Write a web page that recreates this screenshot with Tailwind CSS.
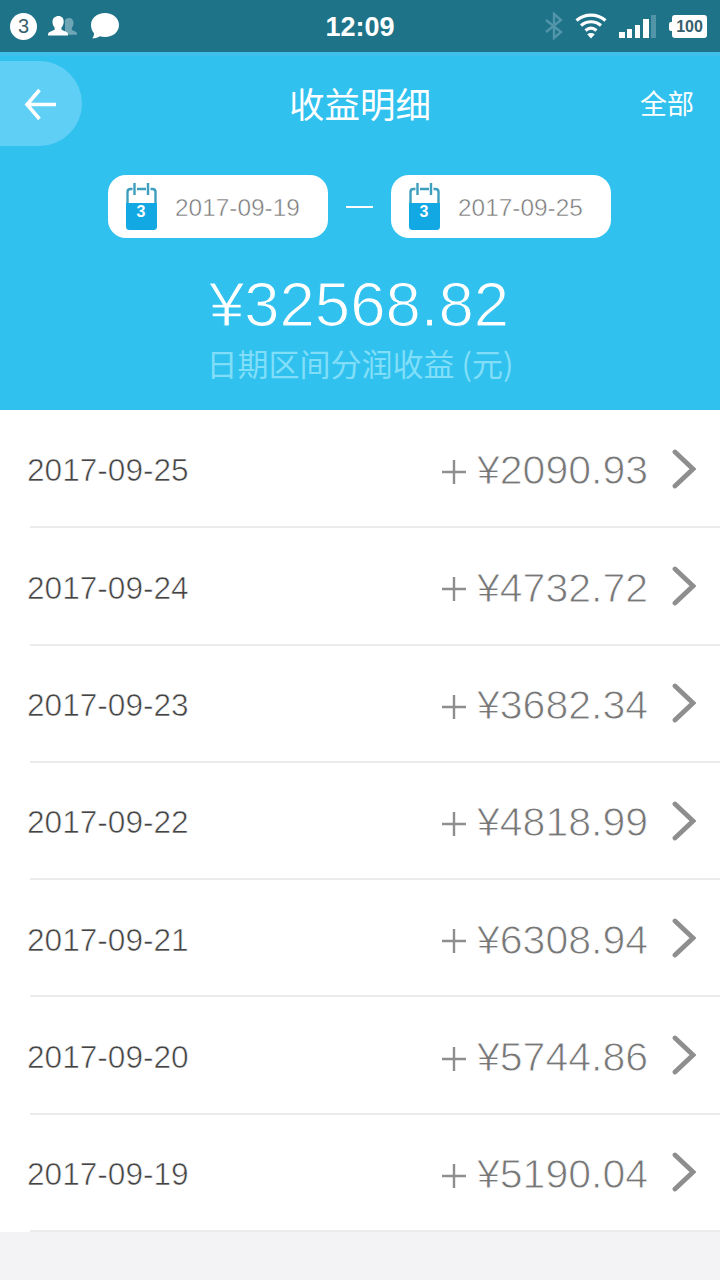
<!DOCTYPE html>
<html lang="zh-CN">
<head>
  <meta charset="UTF-8">
  <meta name="viewport" content="width=device-width, initial-scale=1.0">
  <title>收益明细</title>
  <script src="https://cdn.jsdelivr.net/npm/@tailwindcss/browser@4"></script>
</head>
<body class="bg-[#f3f2f5] font-['Liberation_Sans','Noto_Sans_CJK_SC',sans-serif] w-[720px] h-[1280px] overflow-hidden">

  <!-- Status bar -->
  <div class="h-[52px] bg-[#1f7389] grid grid-cols-3 items-center text-white">
    <div class="flex items-center pl-[10px]">
      <span class="size-[27px] rounded-full bg-white text-[#35606c] text-[20px] leading-none flex items-center justify-center">3</span>
      <svg class="ml-[11px]" width="30" height="22" viewBox="0 0 30 22">
        <path fill="#6fa6b5" d="M21 3c3 0 4.500 2 4.500 5 0 2-.6 3.500-1.700 5v2l4 1.800c1 .5 1.200 1.400 1.200 3H17V5c.9-1.300 2.200-2 4-2z"/>
        <path fill="#fff" d="M10.500 1c3.300 0 5.200 2.200 5.200 5.600 0 2.400-.7 4.300-2.200 6v2.200l5 2.200c1.300.6 1.500 1.700 1.500 3.500H0c0-1.800.3-2.900 1.600-3.500l5-2.200v-2.200c-1.500-1.700-2.100-3.600-2.100-6C4.500 3.200 7.200 1 10.500 1z"/>
      </svg>
      <svg class="ml-[12px]" width="30" height="28" viewBox="0 0 30 28">
        <path fill="#fff" d="M15 1c8 0 14 5 14 12s-6 12-14 12c-2 0-3.800-.3-5.400-.8C7.500 25.700 5 26.500 2.200 26.300c1.200-1.400 1.900-3 1.800-5C2 19 1 16.300 1 13 1 6 7 1 15 1z"/>
      </svg>
    </div>
    <div class="pt-[2px] text-center text-[27px] leading-none font-bold">12:09</div>
    <div class="flex items-center justify-end pr-[13px]">
      <svg width="20" height="28" viewBox="0 0 20 28" fill="none" stroke="#5295a9" stroke-width="2.400">
        <path d="M2 8l15 12-7 6V2l7 6L2 20"/>
      </svg>
      <svg class="ml-[11px]" width="32" height="26" viewBox="0 0 32 26" fill="none" stroke="#fff" stroke-width="3.200">
        <path d="M1.500 7.500c8.500-7.300 20.500-7.300 29 0"/>
        <path d="M6 12.500c6-5 14-5 20 0"/>
        <path d="M10.500 17.500c3.500-3 7.500-3 11 0"/>
        <path fill="#fff" stroke="none" d="M12.200 21.300c2.300-1.900 5.300-1.900 7.600 0L16 25.500z"/>
      </svg>
      <svg class="ml-[12px]" width="38" height="24" viewBox="0 0 38 24" fill="#fff">
        <path d="M0 18h6v6H0zM8 15h5v9H8zM16 11h5v13h-5zM24 5h6v19h-6z"/>
        <path fill="#5295a9" d="M32 1h5v23h-5z"/>
      </svg>
      <div class="ml-[12px] flex items-center">
        <span class="w-[3px] h-[9px] bg-white rounded-l-xs"></span>
        <span class="w-[35px] h-[23px] pt-[2px] rounded-[3px] bg-white text-[#35606c] text-[16px] leading-none font-bold flex items-center justify-center">100</span>
      </div>
    </div>
  </div>

  <!-- Header -->
  <header class="h-[358px] bg-[#30c1ef] text-white border-t-4 border-[#3fc0ec]">
    <div class="h-[96px] pt-[5px] flex items-start justify-between">
      <a href="#" class="w-[82px] h-[85px] rounded-r-full bg-[#5fcff5] flex items-center pl-[24px]">
        <svg width="34" height="32" viewBox="0 0 34 32" fill="none" stroke="#fff" stroke-width="3.600">
          <path d="M32 16.500H3M15.500 2L3 16.500l12.500 14.500"/>
        </svg>
      </a>
      <h1 class="h-[83px] pl-[25px] flex items-center text-[35.500px] font-['Noto_Sans_CJK_SC',sans-serif]">收益明细</h1>
      <a href="#" class="w-[107px] h-[85px] pr-[26px] flex items-center justify-end text-[27px] font-['Noto_Sans_CJK_SC',sans-serif]">全部</a>
    </div>

    <div class="mt-[23px] pr-[1px] flex items-center justify-center">
      <div class="w-[220px] h-[63px] rounded-[18px] bg-white flex items-center pl-[18px]">
        <svg width="31" height="48" viewBox="0 0 31 48">
          <path fill="none" stroke="#3d9fbd" stroke-width="2.400" d="M1.500 21V9c0-2 1-3 3-3h2M11 6h9M24.500 6h2c2 0 3 1 3 3v12M8.500 0v12M22 0v12"/>
          <path fill="#12a8e4" d="M0 20h31v23c0 3-1 4-4 4H4c-3 0-4-1-4-4z"/>
          <text x="15" y="34" fill="#fff" font-size="16" font-weight="700" text-anchor="middle">3</text>
        </svg>
        <span class="ml-[18px] pt-[4px] text-[24.400px] text-[#777] [-webkit-text-stroke:0.5px_#fff]">2017-09-19</span>
      </div>
      <span class="w-[27px] h-[2px] mx-[18px] bg-white"></span>
      <div class="w-[220px] h-[63px] rounded-[18px] bg-white flex items-center pl-[18px]">
        <svg width="31" height="48" viewBox="0 0 31 48">
          <path fill="none" stroke="#3d9fbd" stroke-width="2.400" d="M1.500 21V9c0-2 1-3 3-3h2M11 6h9M24.500 6h2c2 0 3 1 3 3v12M8.500 0v12M22 0v12"/>
          <path fill="#12a8e4" d="M0 20h31v23c0 3-1 4-4 4H4c-3 0-4-1-4-4z"/>
          <text x="15" y="34" fill="#fff" font-size="16" font-weight="700" text-anchor="middle">3</text>
        </svg>
        <span class="ml-[18px] pt-[4px] text-[24.400px] text-[#777] [-webkit-text-stroke:0.5px_#fff]">2017-09-25</span>
      </div>
    </div>

    <p class="mt-[34px] pr-[2px] text-center text-[63.500px] leading-[64px] [-webkit-text-stroke:1.2px_#30c1ef]">¥32568.82</p>
    <p class="mt-[9px] text-center text-[31px] leading-[36px] text-[#80def8] font-['Noto_Sans_CJK_SC',sans-serif]">日期区间分润收益 (元)</p>
  </header>

  <!-- Daily list -->
  <ul id="list" class="bg-white pt-[1px]"></ul>

  <script>
    const items = [
      ['2017-09-25', '2090.93'],
      ['2017-09-24', '4732.72'],
      ['2017-09-23', '3682.34'],
      ['2017-09-22', '4818.99'],
      ['2017-09-21', '6308.94'],
      ['2017-09-20', '5744.86'],
      ['2017-09-19', '5190.04'],
    ];

    document.getElementById('list').innerHTML = items.map(([date, amount]) => `
      <li class="h-[117.300px] flex flex-col">
        <div class="flex-1 flex items-center pl-[27px] pr-[24px] pt-[5px]">
          <span class="text-[31.600px] text-[#444] [-webkit-text-stroke:0.6px_#fff]">${date}</span>
          <svg class="ml-auto mt-[2px]" width="24" height="24" viewBox="0 0 24 24" stroke="#8e8e8e" stroke-width="2.400">
            <path d="M0 12h24M12 0v24"/>
          </svg>
          <span class="ml-[11px] text-[41px] text-[#777] [-webkit-text-stroke:0.9px_#fff]">¥${amount}</span>
          <svg class="ml-[24px] mb-[5px]" width="24" height="40" viewBox="0 0 24 40" fill="none" stroke="#8e8e8e" stroke-width="4.800" stroke-linecap="round">
            <path d="M3 3l18 17L3 37"/>
          </svg>
        </div>
        <div class="ml-[30px] h-[2px] bg-[#ebebeb]"></div>
      </li>`).join('');
  </script>
</body>
</html>
